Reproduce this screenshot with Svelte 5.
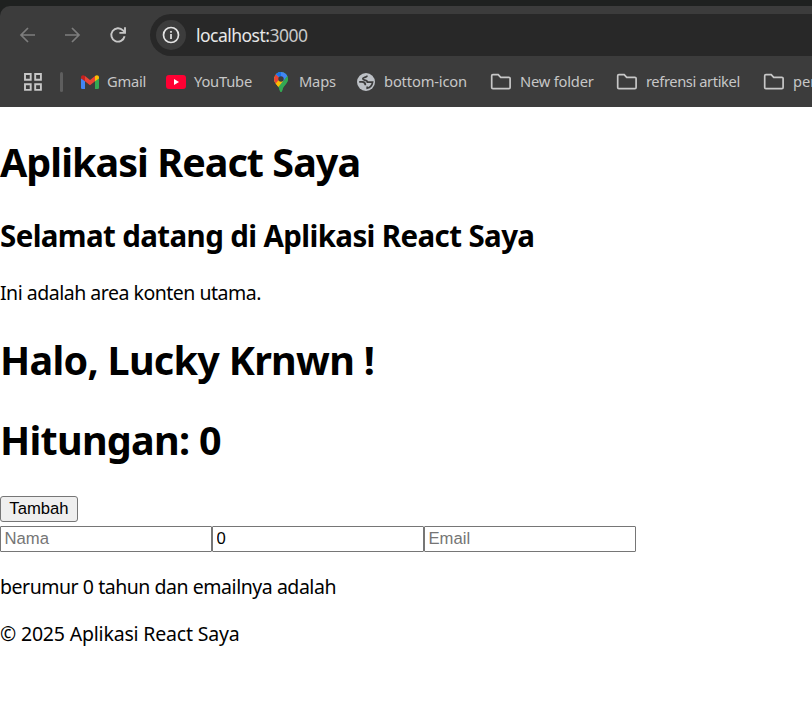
<script>
  let count = $state(0);
  let name = $state('');
  let age = $state('0');
  let email = $state('');
</script>

{#snippet folder()}
  <svg class="folder" width="22" height="18" viewBox="0 0 22 18" fill="none" stroke="#c7c7c7" stroke-width="1.7">
    <path d="M2.9 1.6h5.3l2.5 2.7h8.2a1.2 1.2 0 0 1 1.2 1.2v8.9a1.2 1.2 0 0 1-1.2 1.2H2.9a1.2 1.2 0 0 1-1.2-1.2V2.8a1.2 1.2 0 0 1 1.2-1.2z" />
  </svg>
{/snippet}

<div class="window">
  <header class="chrome">
    <div class="toolbar">
      <svg class="back" width="18" height="18" viewBox="0 0 18 18" fill="none" stroke="#7d7d7d" stroke-width="1.7"><path d="M16 9H2.6M9 2L2 9l7 7" /></svg>
      <svg class="forward" width="18" height="18" viewBox="0 0 18 18" fill="none" stroke="#7d7d7d" stroke-width="1.7"><path d="M2 9h13.4M9 2l7 7-7 7" /></svg>
      <svg class="reload" width="18" height="18" viewBox="0 0 18 18" fill="none" stroke="#c7c7c7" stroke-width="1.9"><path d="M15.6 10.3A6.7 6.7 0 1 1 14 4.4L15.7 6.2" /><path d="M16 1.3v5.6h-5.6" /></svg>
      <div class="address">
        <span class="info">
          <svg width="18" height="18" viewBox="0 0 18 18" fill="none" stroke="#e3e3e3" stroke-width="1.7"><circle cx="9" cy="9" r="7.5" /><path d="M9 8v5M9 5v1.8" /></svg>
        </span>
        <span class="url"><b>localhost:</b>3000</span>
      </div>
    </div>
    <nav class="bookmarks">
      <svg class="apps" width="20" height="20" viewBox="0 0 20 20" fill="none" stroke="#c7c7c7" stroke-width="1.9"><path d="M2 2h5.7v5.7H2zM12.2 2h5.7v5.7h-5.7zM2 12.2h5.7v5.7H2zM12.2 12.2h5.7v5.7h-5.7z" /></svg>
      <i class="divider"></i>
      <svg class="gmail" width="18" height="14" viewBox="0 0 18 14">
        <path fill="#4285f4" d="M0 3v9.8Q0 14 1.2 14H4V5z" /><path fill="#34a853" d="M14 5v9h2.8q1.2 0 1.2-1.2V3z" />
        <path fill="#ea4335" d="M4 1l5 3.9L14 1v5.2l-5 4-5-4z" /><path fill="#c5221f" d="M0 2.3C0 .3 2.3-.5 4 1v5.2L0 3.4z" /><path fill="#fbbc04" d="M18 2.3c0-2-2.3-2.8-4-1.3v5.2l4-2.8z" />
      </svg>
      <span class="t gm">Gmail</span>
      <svg class="youtube" width="20" height="14" viewBox="0 0 20 14"><rect width="20" height="14" rx="3" fill="#ff0033" /><path d="M8 4l5 3-5 3z" fill="#fff" /></svg>
      <span class="t yt">YouTube</span>
      <svg class="maps" width="14" height="20" viewBox="0 0 14 20">
        <defs><clipPath id="pin"><path d="M7 0a7 7 0 0 1 7 7c0 4.5-4.8 6.2-5.7 11.3Q7.9 20 7 20t-1.3-1.7C4.8 13.2 0 11.5 0 7a7 7 0 0 1 7-7z" /></clipPath></defs>
        <g clip-path="url(#pin)"><path fill="#34a853" d="M0 0h14v20H0z" /><path fill="#fbbc04" d="M0 5h7l3 3-7.6 9H0z" /><path fill="#4285f4" d="M0 0h14v4L7 12 2 3z" /><path fill="#34a853" d="M14 3v17H4l3-8z" /><path fill="#1a73e8" d="M0 0h7v7L2 2z" /><path fill="#ea4335" d="M0 0l1.7 2.5L7 7l-5.2 6H0z" /><path fill="#fbbc04" d="M1.3 12.1L6 6.5l3 2.8-5.2 6z" /></g>
        <circle cx="7" cy="7" r="2.7" fill="#3c3c3c" />
      </svg>
      <span class="t mp">Maps</span>
      <svg class="globe" width="18" height="18" viewBox="0 0 18 18"><circle cx="9" cy="9" r="9" fill="#bdc1c6" /><path d="M10.2 2.6c-.3 2.2-4.4 1.4-4.4 3.2 0 2 4.6.6 4.6 3.4h5.2c-.4 2.8-2.4 5.4-5.4 6v-1.6M2.2 8.8h3c2.2 0 3.2 1.2 3.2 3.4" fill="none" stroke="#3c3c3c" stroke-width="1.7" /></svg>
      <span class="t bi">bottom-icon</span>
      {@render folder()}
      <span class="t nf">New folder</span>
      {@render folder()}
      <span class="t ra">refrensi artikel</span>
      {@render folder()}
      <span class="t last">per</span>
    </nav>
  </header>

  <main>
    <h1 class="title">Aplikasi React Saya</h1>
    <h2>Selamat datang di Aplikasi React Saya</h2>
    <p class="intro">Ini adalah area konten utama.</p>
    <h1 class="hello">Halo, Lucky Krnwn !</h1>
    <h1 class="count">Hitungan: {count}</h1>
    <button onclick={() => count++}>Tambah</button>
    <div class="fields">
      <input placeholder="Nama" bind:value={name} />
      <input bind:value={age} />
      <input placeholder="Email" bind:value={email} />
    </div>
    <p class="result">{name} berumur {age} tahun dan emailnya adalah {email}</p>
    <p class="copyright">© 2025 Aplikasi React Saya</p>
  </main>
</div>

<style>
  :global(body) { margin: 0; overflow: hidden; background: #fff; }
  .window { width: 812px; height: 715px; overflow: hidden; font-family: "Noto Sans", sans-serif; color: #000; }
  .chrome { height: 107px; padding-top: 6px; box-sizing: border-box; background: linear-gradient(#1f2120 16px, #3c3c3c 16px); }
  .toolbar { height: 50px; padding-top: 8px; box-sizing: border-box; display: flex; align-items: center; background: #3c3c3c; border-top-left-radius: 10px; }
  svg { display: block; flex: none; }
  .back { margin-left: 18.5px; }
  .forward { margin-left: 26.5px; }
  .reload { margin-left: 27.5px; }
  .address { margin-left: 23.5px; flex: 1; height: 42px; border-radius: 21px 0 0 21px; background: #282828; display: flex; align-items: center; }
  .info { width: 30px; height: 30px; margin-left: 6px; border-radius: 50%; background: #3c3c3c; display: flex; align-items: center; justify-content: center; }
  .url { margin-left: 10px; font-size: 17.5px; line-height: 24px; color: #c7c7c7; letter-spacing: -0.52px; }
  .url b { font-weight: 400; color: #e8e8e8; }
  .bookmarks { height: 51px; display: flex; align-items: center; box-sizing: border-box; padding-left: 22.5px; white-space: nowrap; overflow: hidden; font-size: 14.7px; color: #c7c7c7; }
  .divider { width: 3px; height: 20px; border-radius: 2px; background: #5e5e5e; margin: 0 18px 0 17.5px; flex: none; }
  .t { margin-left: 8px; line-height: 20px; padding-bottom: 2px; flex: none; }
  .gm { width: 59px; letter-spacing: -0.25px; }
  .yt { width: 80px; letter-spacing: -0.2px; }
  .maps { margin-right: 3px; }
  .mp { width: 58px; letter-spacing: -0.2px; }
  .bi { width: 106px; margin-left: 9px; letter-spacing: -0.15px; }
  .nf { width: 96px; letter-spacing: -0.2px; }
  .ra { width: 117px; letter-spacing: -0.4px; }
  h1, h2, p { margin: 0; white-space: nowrap; }
  h1 { font-size: 39.5px; line-height: 53px; }
  h2 { font-size: 29.5px; line-height: 40px; margin-top: 27px; letter-spacing: -0.62px; }
  p { font-size: 19.5px; line-height: 27px; }
  .title { margin-top: 29px; letter-spacing: -0.97px; }
  .intro { margin-top: 23px; letter-spacing: -0.49px; }
  .hello { margin-top: 28px; letter-spacing: -0.72px; }
  .count { margin-top: 27px; letter-spacing: -0.73px; }
  button { display: block; margin-top: 29px; width: 78px; height: 26px; padding: 0; border: 1px solid #767676; border-radius: 3px; background: #efefef; color: #000; font: 16.67px "Liberation Sans", sans-serif; }
  .fields { display: flex; margin-top: 4px; }
  input { width: 212px; height: 26px; box-sizing: border-box; padding: 0 3.5px; border: 1px solid #767676; border-radius: 1px; background: #fff; color: #000; font: 16.67px "Liberation Sans", sans-serif; }
  input::placeholder { color: #757575; opacity: 1; }
  .result { margin-top: 21px; letter-spacing: -0.46px; }
  .copyright { margin-top: 20px; letter-spacing: -0.19px; }
</style>
